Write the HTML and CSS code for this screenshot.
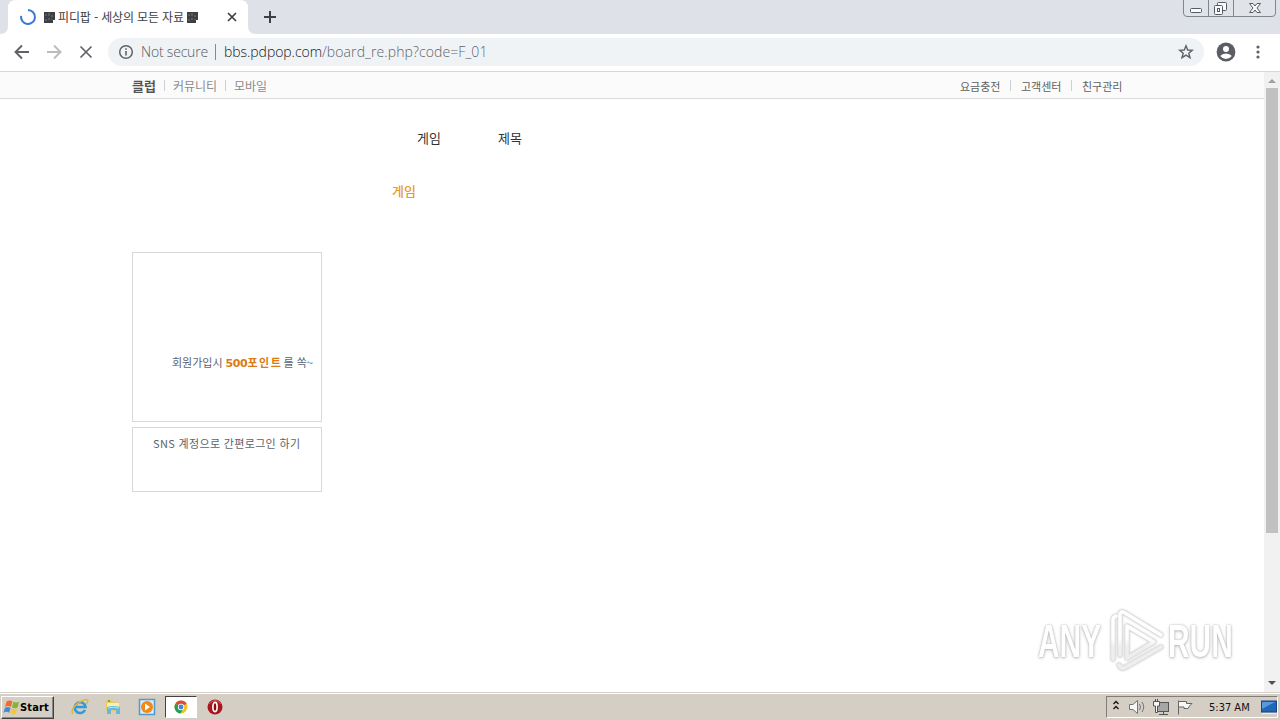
FILE: index.html
```html
<!DOCTYPE html>
<html lang="ko">
<head>
<meta charset="utf-8">
<title>피디팝 - 세상의 모든 자료</title>
<link rel="stylesheet" href="styles.css">
</head>
<body>
<div class="screen">
  <header class="tabstrip">
    <svg class="tab-shape" width="264" height="34" viewBox="0 0 264 34"><path d="M0 34Q8 34 8 26V8Q8 0 16 0H240Q248 0 248 8V26Q248 34 256 34Z" fill="#fff"/></svg>
    <div class="tab">
      <svg class="spinner" width="18" height="18" viewBox="0 0 18 18"><path d="M9 2A7 7 0 1 1 2.1 7.8" fill="none" stroke="#3b78d8" stroke-width="2"/></svg>
      <svg class="tofu" width="11" height="11" viewBox="0 0 11 11"><path d="M0 0H11V8H9V11H0Z" fill="#3c4043"/><path d="M2 2v2M5 1v3M8 3v2M2 7v2M5 6v2M8 7v1" stroke="#777"/></svg>
      <span class="tab-title">피디팝 - 세상의 모든 자료</span>
      <svg class="tofu" width="11" height="11" viewBox="0 0 11 11"><path d="M0 0H11V8H9V11H0Z" fill="#3c4043"/><path d="M2 2v2M5 1v3M8 3v2M2 7v2M5 6v2M8 7v1" stroke="#777"/></svg>
      <svg class="tab-close" width="10" height="10" viewBox="0 0 10 10"><path d="M1 1L9 9M9 1L1 9" stroke="#3c4043" stroke-width="1.7"/></svg>
    </div>
    <svg class="new-tab" width="12" height="12" viewBox="0 0 12 12"><path d="M6 0V12M0 6H12" stroke="#3c4043" stroke-width="2"/></svg>
    <svg class="window-buttons" width="94" height="17" viewBox="0 0 94 17"><path d="M.5 0V13Q.5 16.500 4 16.500H89Q92.500 16.500 92.500 13V0M25.500 0V16M50.500 0V16" fill="#e0e3e8" stroke="#80868e"/><g fill="#fafafa" stroke="#555b64"><rect x="7.500" y="8.500" width="11" height="4" rx="1"/><rect x="34.500" y="2.500" width="9" height="8" rx="1"/><rect x="31.500" y="5.500" width="8" height="9" rx="1"/><rect x="34.500" y="8.500" width="2" height="3"/><path d="M66.500 3.500H70L72 6L74 3.500H77.500L74 8L77.500 12.500H74L72 10L70 12.500H66.500L70 8Z"/></g></svg>
  </header>
  <div class="toolbar">
    <svg class="nav-icons" width="108" height="38" viewBox="0 0 108 38" fill="none" stroke-width="1.9"><path d="M29 18H16M22 11.500L15.500 18L22 24.500" stroke="#5f6368"/><path d="M47 18H60M54 11.500L60.500 18L54 24.500" stroke="#babcbe"/><path d="M80.500 12.500L91.500 23.500M91.500 12.500L80.500 23.500" stroke="#5f6368" stroke-width="1.700"/></svg>
    <div class="omnibox">
      <svg class="info" width="16" height="16" viewBox="0 0 16 16"><circle cx="8" cy="8" r="6.300" fill="none" stroke="#5f6368" stroke-width="1.500"/><path d="M8 7V11.500M8 4.200V5.800" stroke="#5f6368" stroke-width="1.600"/></svg>
      <span class="insecure">Not secure</span>
      <span class="address"><b>bbs.pdpop.com</b>/board_re.php?code=F_01</span>
      <svg class="star" width="16" height="16" viewBox="0 0 16 16"><path d="M8 1.800L9.700 6L14.300 6.300L10.800 9.200L12 13.700L8 11.200L4 13.700L5.200 9.200L1.700 6.300L6.300 6Z" fill="none" stroke="#5f6368" stroke-width="1.400"/></svg>
    </div>
    <svg class="profile" width="20" height="20" viewBox="0 0 20 20"><circle cx="10" cy="10" r="9.400" fill="#5a5d63"/><circle cx="10" cy="7" r="3" fill="#fff"/><path d="M4.200 14Q6 11.400 10 11.400T15.800 14Q13.500 17 10 17T4.200 14Z" fill="#fff"/></svg>
    <svg class="more" width="4" height="14" viewBox="0 0 4 14" fill="#5f6368"><circle cx="2" cy="2" r="1.600"/><circle cx="2" cy="7" r="1.600"/><circle cx="2" cy="12" r="1.600"/></svg>
  </div>
  <main class="viewport">
    <div class="page">
      <nav class="site-bar">
        <span class="club">클럽</span><i class="sep"></i><span class="community">커뮤니티</span><i class="sep"></i><span class="mobile">모바일</span>
        <span class="charge">요금충전</span><i class="sep"></i><span class="center">고객센터</span><i class="sep"></i><span class="friends">친구관리</span>
      </nav>
      <div class="search-row"><span>게임</span><span>제목</span></div>
      <h1 class="category">게임</h1>
      <aside class="side">
        <section class="login"><p><span>회원가입시</span><strong>500<span class="points">포인트</span></strong><span class="tail">를 쏙~</span></p></section>
        <section class="sns"><span>SNS 계정으로 간편로그인 하기</span></section>
      </aside>
      <div class="watermark">
        <span class="mark-any">ANY</span>
        <svg class="mark-logo" width="60" height="66" viewBox="0 0 60 66" fill="none" stroke-linejoin="round" stroke-linecap="round"><defs><linearGradient id="fade" gradientUnits="userSpaceOnUse" x1="0" y1="0" x2="0" y2="66"><stop offset=".45" stop-color="#fff"/><stop offset=".6" stop-color="#eee"/></linearGradient></defs><g stroke="#dcdcdc" stroke-width="5"><path d="M6 51V12Q6 9 9 8"/><path d="M13 47V7Q13 2 18 5L54 27"/><path d="M20 47V18L47 34L20 50Z"/><path d="M12 57Q14 62 19 59L54 39"/></g><g stroke="url(#fade)" stroke-width="3.500"><path d="M6 51V12Q6 9 9 8"/><path d="M13 47V7Q13 2 18 5L54 27"/><path d="M20 47V18L47 34L20 50Z"/><path d="M12 57Q14 62 19 59L54 39"/></g></svg>
        <span class="mark-run">RUN</span>
      </div>
    </div>
    <div class="scrollbar"><svg width="16" height="16" viewBox="0 0 16 16"><path d="M4 11L8 7L12 11Z" fill="#a0a0a0"/></svg><i class="thumb"></i><svg class="down" width="16" height="16" viewBox="0 0 16 16"><path d="M4 5H12L8 9Z" fill="#505050"/></svg></div>
  </main>
  <footer class="taskbar">
    <div class="start">
      <svg width="17" height="17" viewBox="0 0 18 17"><path d="M4 2Q7 0 10 2L8.500 8Q5 6 2 8Z" fill="#ee6b32"/><path d="M11 2.500Q14 4 17 2.500L15.500 8.500Q12.500 10 9.500 8.500Z" fill="#81b63b"/><path d="M2 9Q5 7 8 9L6.500 14Q3.500 12 .5 14Z" fill="#4389d6"/><path d="M9 9.500Q12 11 15 9.500L13.500 15Q10.500 16.500 7.500 14.500Z" fill="#f8c631"/></svg><span>Start</span>
    </div>
    <svg class="ie" width="18" height="18" viewBox="0 0 18 18" fill="none"><path d="M14 12A5.400 5.400 0 1 1 14.500 9H5" stroke="#2d9bdc" stroke-width="2.600"/><path d="M2 16Q-1 12 6 6Q14 0 16.500 2Q17.500 3 15.500 6" stroke="#e1b53c" stroke-width="1.500"/></svg>
    <svg class="explorer" width="18" height="18" viewBox="0 0 18 18"><path d="M2 3Q2 2 3 2H7L9 4H14V13H2Z" fill="#e8c964"/><path d="M3 5H15V9H3Z" fill="#faeeb0"/><path d="M3 9Q9 7 16 9V16H12V12H7V16H3Z" fill="#64b9dd"/><path d="M4 10Q9 8.500 15 10" stroke="#b9e2f2" fill="none"/><path d="M4 3h2" stroke="#6bad4a" stroke-width="2"/></svg>
    <svg class="media" width="18" height="18" viewBox="0 0 18 18"><rect x="1.500" y="1.500" width="15" height="15" fill="#d8ecf9" stroke="#519bd0" stroke-width="1.500"/><circle cx="9" cy="9" r="6" fill="#f18917"/><path d="M7 5.500L12 9L7 12.500Z" fill="#fff"/></svg>
    <div class="chrome-task"><svg width="14" height="14" viewBox="0 0 14 14"><circle cx="7" cy="7" r="6.500" fill="#f4c51b"/><path d="M7 7L1.400 3.700A6.500 6.500 0 0 1 12.600 3.700Z" fill="#dc4b3d"/><path d="M7 7L1.400 3.700A6.500 6.500 0 0 0 6.500 13.500L9.800 8Z" fill="#289b55"/><circle cx="7" cy="7" r="3.200" fill="#fff"/><circle cx="7" cy="7" r="2.400" fill="#4283e5"/></svg></div>
    <svg class="opera" width="16" height="16" viewBox="0 0 16 16"><circle cx="8" cy="8" r="7.500" fill="#a8171d"/><path d="M2 5Q8-2 14 5" stroke="#d95559" fill="none"/><ellipse cx="8" cy="8" rx="2.100" ry="4.600" fill="#8b0c12" stroke="#fff" stroke-width="1.700"/></svg>
    <div class="tray">
      <svg width="100" height="20" viewBox="0 0 100 20"><g fill="none" stroke="#111" stroke-width="1.300"><path d="M6.500 7L9 4.500L11.500 7M6.500 12L9 9.500L11.500 12"/></g><g fill="#f7f7f7" stroke="#737373"><path d="M22.500 7.500H26L30.500 3.500V16.500L26 12.500H22.500Z"/><path d="M32.500 7Q34.500 10 32.500 13M35 5Q38.500 10 35 15" fill="none"/><rect x="50.500" y="5.500" width="11" height="9" fill="#a6a6a6" stroke="#555"/><path d="M52 17.500H61M56.500 15V17" stroke="#555"/><path d="M46.500 4.500H52.500V9H50.500V15.500H48.500V9H46.500ZM48.500 2V5M50.500 2V5" stroke="#555"/><path d="M71.500 3.500V17.500M71.500 4.500H79.500V6.500H85Q82 9 81 11.500H77V10H71.500" stroke="#666"/></g></svg>
      <time>5:37 AM</time>
      <svg class="desktop-icon" width="16" height="15" viewBox="0 0 16 15"><rect x=".5" y="1" width="15" height="11" fill="#2266b8" stroke="#12448c"/><path d="M1 2H14L1 9Z" fill="#579adc"/><path d="M1 13.500H15" stroke="#eee"/></svg>
    </div>
  </footer>
</div>
</body>
</html>
```
FILE: styles.css
```css
* { box-sizing: border-box; }
body { margin: 0; font-family: "Noto Sans CJK KR", sans-serif; }
svg { display: block; flex: none; }
span { white-space: nowrap; }
.screen { width: 1280px; height: 720px; display: flex; flex-direction: column; overflow: hidden; background: #fff; }
.tabstrip { height: 34px; flex: none; position: relative; display: flex; align-items: flex-start; background: #dee1e8; }
.tab-shape { position: absolute; left: 0; top: 0; }
.tab { position: relative; width: 248px; height: 34px; padding-left: 19px; display: flex; align-items: center; }
.spinner { margin-right: 7px; }
.tab-title { width: 129px; margin-left: 3px; font-size: 12px; line-height: 18px; letter-spacing: -.14px; color: #3c4043; }
.tab-close { margin-left: auto; margin-right: 11px; }
.new-tab { margin: 11px 0 0 16px; }
.window-buttons { margin: 0 3px 0 auto; }
.toolbar { height: 38px; flex: none; display: flex; border-bottom: 1px solid #d6d8da; background: #fff; }
.omnibox { margin-top: 4px; width: 1096px; height: 28px; border-radius: 14px; padding: 0 10px; display: flex; align-items: center; background: #f0f3f6; font: 300 14px/20px "Open Sans", sans-serif; }
.insecure { width: 75px; margin-left: 7px; color: #555a60; border-right: 1px solid #85898e; line-height: 16px; letter-spacing: -.2px; }
.address { margin-left: 8px; color: #5f6368; letter-spacing: .1px; }
.address b { font-weight: 300; color: #15181c; letter-spacing: -.05px; }
.star { margin-left: auto; }
.profile { margin: 8px 0 0 12px; }
.more { margin: 11px 0 0 20px; }
.viewport { height: 620px; flex: none; display: flex; }
.page { width: 1264px; position: relative; }
.site-bar { height: 27px; padding: 1px 0 0 132px; display: flex; align-items: center; border-bottom: 1px solid #dcdcdc; background: #fbfbfb; font-size: 12px; line-height: 18px; color: #8b8b8b; }
.club { width: 32px; font-weight: 700; font-size: 13px; color: #555; }
.sep { width: 1px; height: 11px; background: #d0d0d0; }
.community { width: 52px; margin-left: 8px; }
.mobile { margin-left: 8px; }
.charge { margin-left: auto; width: 50px; }
.charge, .center, .friends { font-size: 11px; color: #606060; }
.center { width: 50px; margin-left: 10px; }
.friends { width: 182px; margin-left: 10px; }
.search-row { display: flex; gap: 57px; padding: 30px 0 0 417px; font-size: 13px; line-height: 18px; color: #333; }
.category { margin: 35px 0 0 392px; font-size: 13px; line-height: 18px; font-weight: 500; color: #e79b26; }
.side { width: 190px; margin: 52px 0 0 132px; display: flex; flex-direction: column; gap: 5px; font-size: 11px; line-height: 16px; color: #59636e; }
.login, .sns { border: 1px solid #d8d8d8; }
.login { height: 170px; padding: 101px 0 0 39px; }
.login p { margin: 0; display: flex; align-items: baseline; }
.login strong { margin-left: 3px; width: 58px; font-family: "DejaVu Sans", "Noto Sans CJK KR", sans-serif; letter-spacing: -.4px; color: #d97b16; white-space: nowrap; }
.login .points { letter-spacing: 1.6px; }
.sns { height: 65px; padding: 7px 0 0 20px; letter-spacing: .34px; }
.watermark { position: absolute; left: 1038px; top: 533px; width: 200px; height: 70px; display: flex; color: #fff; font: 700 46px/73px "Liberation Sans", sans-serif; text-shadow: 0 0 2px #aaa, 0 1px 4px #bbb; }
.mark-any, .mark-run { background: linear-gradient(#fff 56%, #f6f6f6 57%); background-clip: text; }
.mark-any { width: 69px; transform: scaleX(.65); transform-origin: left; }
.mark-logo { margin-top: 3px; filter: drop-shadow(0 0 1px #ccc); }
.mark-run { width: 64px; margin-left: 1px; transform: scaleX(.65); transform-origin: left; }
.scrollbar { width: 16px; display: flex; flex-direction: column; align-items: center; background: #f1f1f1; }
.thumb { width: 12px; height: 445px; background: #c1c1c1; }
.down { margin-top: auto; }
.taskbar { height: 28px; display: flex; align-items: flex-start; padding-top: 3px; border-top: 1px solid #d5d1ca; background: #d5cec5; box-shadow: inset 0 1px #fff; }
.start { width: 53px; height: 23px; margin-left: 1px; padding-left: 1px; display: flex; align-items: center; border: 1px solid; border-color: #fff #44413e #44413e #fff; box-shadow: inset -1px -1px #8c8780; font: 700 11px/15px "DejaVu Sans Condensed", "DejaVu Sans", sans-serif; }
.start span { letter-spacing: .15px; }
.ie { margin: 2px 0 0 17px; }
.explorer { margin: 2px 0 0 15px; }
.media { margin: 2px 0 0 16px; }
.chrome-task { width: 32px; height: 22px; margin-left: 9px; display: flex; align-items: center; justify-content: center; border: 1px solid; border-color: #44413e #fff #fff #44413e; background: #fff; }
.opera { margin: 3px 0 0 10px; }
.tray { width: 172px; height: 22px; margin: 0 2px 0 auto; display: flex; align-items: center; border: 1px solid; border-color: #827d76 #fff #fff #827d76; }
.tray time { width: 52px; margin-left: 2px; padding-top: 1px; font: 11px/16px "DejaVu Sans Condensed", "DejaVu Sans", sans-serif; white-space: nowrap; letter-spacing: 0; color: #111; }
```
